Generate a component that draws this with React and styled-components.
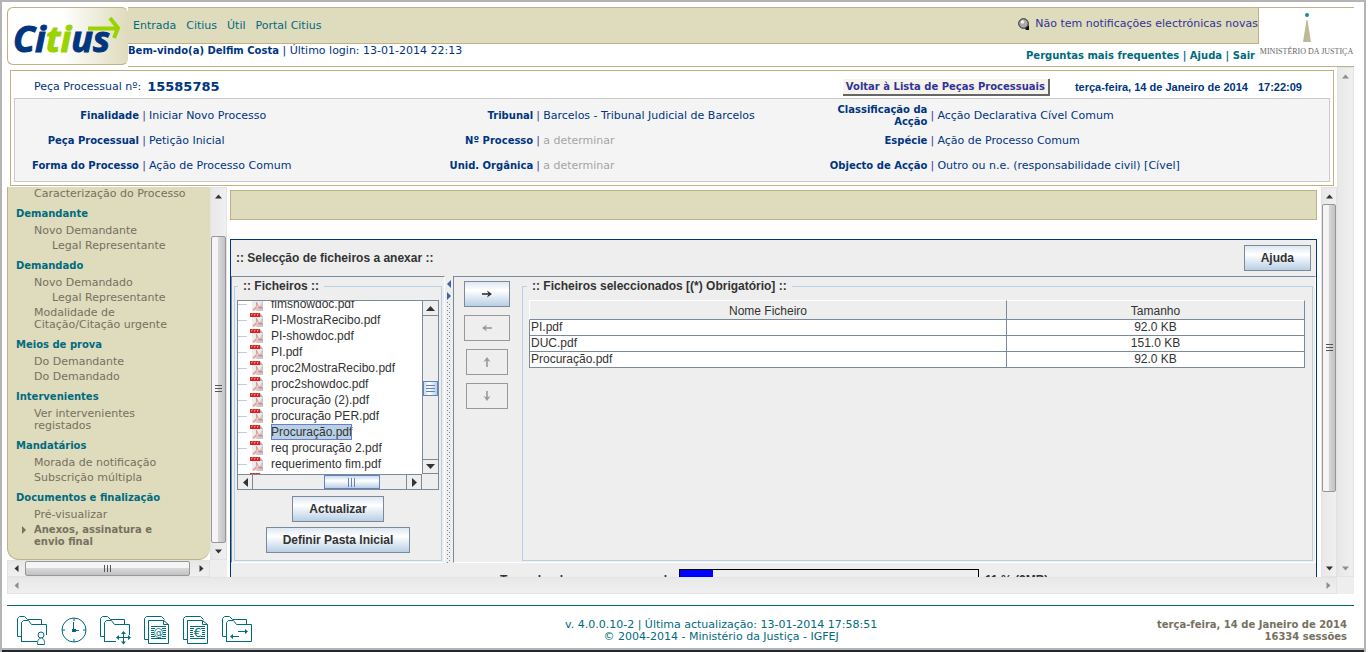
import React, { useState } from "react";
import styled, { createGlobalStyle, css } from "styled-components";

const GlobalStyle = createGlobalStyle`
    * { box-sizing: border-box; }
    body {
        margin: 0;
        background: #fff;
        font-family: "DejaVu Sans", Verdana, sans-serif;
        font-size: 11px;
        line-height: 12px;
        color: #003580;
    }
    a { color: inherit; text-decoration: none; }
    button { font: inherit; cursor: pointer; }
    ul { list-style: none; margin: 0; padding: 0; }
`

const Page = styled.div`
    display: flex;
    flex-direction: column;
    height: 100vh;
    margin-right: 2px;
    padding: 5px 10px 0 5px;
    border: 2px solid #b4b4b4;
    border-bottom: 0;
    overflow: hidden;
`

const Header = styled.header`
    display: flex;
    flex: none;
    height: 60px;
`

const LogoBox = styled.a`
    flex: none;
    width: 121px;
    height: 58px;
    border: 1px solid #bfb186;
    border-right-color: #dfdbbd;
    border-radius: 6px;
    background: linear-gradient(90deg, #fff 45%, #dfdbbd);
    svg { display: block; }
`

const HeaderBody = styled.div`
    display: flex;
    flex: 1;
    border-bottom: 1px solid #bfb186;
`

const HeaderBars = styled.div`
    display: flex;
    flex-direction: column;
    flex: 1;
`

const NavBar = styled.nav`
    display: flex;
    align-items: center;
    gap: 10px;
    height: 37px;
    padding-left: 5px;
    border: 1px solid #bfb186;
    border-left: 0;
    background: #dfdbbd;
    color: #006b7d;
`

const Notice = styled.a`
    display: flex;
    align-items: center;
    gap: 5px;
    margin-left: auto;
    padding-bottom: 3px;
    color: #333399;
`

const WelcomeBar = styled.div`
    display: flex;
    justify-content: space-between;
    padding: 1px 4px 0 0;
    b { font-size: 10px; }
`

const HelpLinks = styled.div`
    padding-top: 5px;
    font-size: 10px;
    font-weight: bold;
    color: #006b7d;
`

const Ministry = styled.div`
    width: 95px;
    border-top: 1px solid #bfb186;
    font-family: "Liberation Serif", serif;
    font-size: 8px;
    text-align: center;
    white-space: nowrap;
    color: #666;
    svg { display: block; margin: 5px auto 4px; }
`

const Frameset = styled.div`
    display: grid;
    grid-template-columns: minmax(0, 1fr) 17px;
    grid-template-rows: minmax(0, 1fr) 17px;
    flex: 1;
    min-height: 0;
`

const FrameContent = styled.div`
    display: flex;
    flex-direction: column;
    min-height: 0;
`

const ProcessPanel = styled.section`
    flex: none;
    margin: 3px 3px 1px;
    padding: 0 3px 3px;
    border: 1px solid #bfb186;
`

const ProcessTitle = styled.div`
    display: flex;
    align-items: center;
    height: 27px;
    padding: 5px 28px 0 20px;
    strong { margin-left: 6px; font-size: 13px; }
    button { margin-left: auto; }
`

const BackButton = styled.button`
    height: 17px;
    padding: 0 3px;
    border: 0 solid #666;
    border-width: 0 2px 2px 0;
    background: #f5f3ec;
    font-size: 10px;
    font-weight: bold;
    line-height: 15px;
    color: #333399;
`

const Clock = styled.span`
    display: flex;
    gap: 10px;
    margin-left: 25px;
    font-family: "Liberation Sans", Arial, sans-serif;
    font-weight: bold;
`

const ProcessData = styled.div`
    display: grid;
    grid-template-columns: 30% 30% 40%;
    padding: 4px 0 3px;
    border: 1px solid #ccc;
    background: #f4f4f4;
`

const DataItem = styled.div`
    display: flex;
    align-items: center;
    height: 25px;
    color: ${props => props.$pending ? "#a5a5a5" : "#003580"};
`

const DataLabel = styled.b`
    width: 124px;
    padding-left: 8px;
    font-size: 10px;
    text-align: right;
    color: #003580;
`

const DataBar = styled.span`
    width: 10px;
    text-align: center;
    color: #4a3f96;
`

const Workspace = styled.div`
    display: flex;
    flex: 1;
    gap: 3px;
    min-height: 0;
`

const Sidebar = styled.aside`
    display: grid;
    grid-template-columns: 203px 17px;
    grid-template-rows: minmax(0, 1fr) 17px;
    flex: none;
`

const Menu = styled.nav`
    overflow: hidden;
    border: 1px solid #bfb186;
    border-width: 0 0 1px 1px;
    border-radius: 0 0 12px 12px;
    background: #dfdbbd;
    color: #76705f;
`

const MenuHeading = styled.h3`
    margin: 0;
    padding: 6px 0 4px 8px;
    font-size: 10px;
    line-height: 12px;
    color: #006b7d;
`

const MenuItem = styled.li`
    display: flex;
    padding: 1px 8px 2px ${props => props.$nested ? 44 : 26}px;
    white-space: pre-line;
    ${props => props.$active && css`
        font-size: 10px;
        font-weight: bold;
        &::before {
            content: "";
            width: 4px;
            height: 8px;
            margin: 2px 8px 0 -12px;
            background: #76705f;
            clip-path: polygon(0 0, 100% 50%, 0 100%);
        }
    `}
`

const MainFrame = styled.main`
    display: flex;
    flex: 1;
    gap: 4px;
    min-width: 0;
`

const MainContent = styled.div`
    display: flex;
    flex-direction: column;
    flex: 1;
    min-width: 0;
    padding-top: 3px;
    overflow: hidden;
`

const EmptyBar = styled.div`
    flex: none;
    height: 30px;
    margin-bottom: 19px;
    border: 1px solid #bfb186;
    background: #dfdbbd;
`

const Applet = styled.div`
    flex: 1;
    min-height: 0;
    overflow: hidden;
    border: 1px solid #003580;
    border-bottom: 0;
    background: #eee;
    font-family: "Liberation Sans", Arial, sans-serif;
    font-size: 12px;
    line-height: 16px;
    color: #333;
`

const AppletTitle = styled.div`
    display: flex;
    align-items: center;
    justify-content: space-between;
    height: 36px;
    padding: 0 5px;
    font-weight: bold;
`

const JavaButton = styled.button`
    height: 26px;
    padding: 0 16px;
    border: 1px solid #7a8a99;
    background: linear-gradient(#dde8f3, #fff 35%, #b8cfe5);
    font-weight: bold;
    color: #333;
    svg { display: block; margin: 0 auto; }
    &:disabled {
        border-color: #999;
        background: #eee;
        color: #999;
    }
`

const SplitPane = styled.div`
    display: grid;
    grid-template-columns: 214px 8px minmax(0, 1fr);
    height: 287px;
`

const Pane = styled.div`
    display: flex;
    padding: 1px 2px;
    border: 1px solid #7a8a99;
    border-right-color: #fff;
    border-bottom-color: #fff;
`

const Divider = styled.div`
    padding: 4px 2px 0;
    background:
        radial-gradient(circle at 0 0, #7a8a99 1px, transparent 1px) 0 0 / 4px 4px,
        radial-gradient(circle at 0 0, #7a8a99 1px, transparent 1px) 2px 2px / 4px 4px;
    background-clip: content-box;
    svg { display: block; background: #eee; }
`

const Group = styled.fieldset`
    flex: 1;
    min-width: 0;
    margin: 0;
    padding: 6px 2px 0 2px;
    border: 1px solid #b8cfe5;
    legend {
        margin-left: ${props => props.$wide ? 2 : 1}px;
        padding: 0 5px;
        font-weight: bold;
        line-height: 16px;
    }
`

const FileBox = styled.div`
    display: grid;
    grid-template-columns: minmax(0, 1fr) 16px;
    grid-template-rows: 173px 15px;
    border: 1px solid #7a8a99;
`

const FileList = styled.div`
    overflow: hidden;
    background: #fff;
    ul { margin-top: -5px; }
`

const FileItem = styled.li`
    display: flex;
    align-items: center;
    height: 16px;
    white-space: nowrap;
    &::before {
        content: "";
        width: 9px;
        margin-right: 3px;
        border-top: 1px solid #b8cfe5;
    }
    svg { margin-right: 7px; }
    span {
        outline: ${props => props.$selected ? "1px solid #6382bf" : "none"};
        outline-offset: -1px;
        background: ${props => props.$selected ? "#b8cfe5" : "none"};
    }
`

const JavaScroll = styled.div`
    display: flex;
    flex-direction: ${props => props.$horizontal ? "row" : "column"};
    border: 0 solid #7a8a99;
    border-width: ${props => props.$horizontal ? "1px 1px 0 0" : "0 0 0 1px"};
    button {
        display: flex;
        align-items: center;
        justify-content: center;
        flex: 0 0 15px;
        padding: 0;
        border: 0 solid #7a8a99;
        background: #eee;
    }
    button:first-child { border-width: ${props => props.$horizontal ? "0 1px 0 0" : "0 0 1px"}; }
    button:last-child { border-width: ${props => props.$horizontal ? "0 0 0 1px" : "1px 0"}; }
`

const JavaThumb = styled.div`
    display: flex;
    flex-direction: ${props => props.$horizontal ? "row" : "column"};
    align-items: center;
    justify-content: center;
    gap: 2px;
    flex: 0 0 ${props => props.$horizontal ? 56 : 15}px;
    border: 1px solid #6382bf;
    background: linear-gradient(${props => props.$horizontal ? "180deg" : "90deg"}, #c8dbee, #fff 40%, #b8cfe5);
    i {
        width: ${props => props.$horizontal ? 1 : 9}px;
        height: ${props => props.$horizontal ? 9 : 1}px;
        background: #6382bf;
    }
`

const Gap = styled.div`
    flex: ${props => props.$grow} 1 0;
`

const FileActions = styled.div`
    display: flex;
    flex-direction: column;
    align-items: center;
    gap: 5px;
    padding-top: 6px;
`

const MoveButtons = styled.div`
    display: flex;
    flex-direction: column;
    align-items: center;
    gap: 8px;
    width: 46px;
    margin: 3px 12px 0 8px;
    ${JavaButton} { width: 42px; padding: 0; }
    ${JavaButton}:nth-child(-n+2) { width: 46px; }
`

const FileTable = styled.table`
    width: calc(100% - 9px);
    margin-left: 4px;
    border-collapse: separate;
    border-spacing: 0;
    table-layout: fixed;
    line-height: 15px;
    th, td {
        padding: 0;
        border: 0 solid #7a8a99;
        border-width: 0 1px 1px 0;
        text-align: center;
        font-weight: normal;
    }
    th {
        height: 20px;
        padding-top: 2px;
        border-top: 1px solid #fff;
    }
    td { height: 16px; background: #fff; }
    td:first-child {
        padding-left: 1px;
        border-left-width: 1px;
        text-align: left;
    }
    th:first-child { width: 61.6%; border-left: 1px solid #fff; }
`

const UsageRow = styled.div`
    display: flex;
    gap: 6px;
    padding: 6px 0 0 269px;
    font-weight: bold;
    span { padding-top: 3px; white-space: nowrap; }
    span:first-child { width: 173px; }
`

const UsageBar = styled.div`
    width: 300px;
    height: 24px;
    border: 1px solid #000;
    div { height: 100%; background: #0000ff; }
`

const ScrollTrack = styled.div`
    display: flex;
    flex-direction: ${props => props.$horizontal ? "row" : "column"};
    flex: none;
    ${props => props.$horizontal ? "height" : "width"}: ${props => props.$slim ? 16 : 17}px;
    border: 1px solid #e3e3e3;
    background: linear-gradient(${props => props.$horizontal ? "180deg" : "90deg"}, #e8e8e8, #f0f0f0);
    button {
        display: flex;
        align-items: center;
        justify-content: center;
        flex: 0 0 16px;
        padding: 0;
        border: 0;
        background: none;
        opacity: ${props => props.$disabled ? 0.5 : 1};
    }
`

const ScrollThumb = styled.div`
    display: flex;
    flex-direction: ${props => props.$horizontal ? "row" : "column"};
    align-items: center;
    justify-content: center;
    gap: 1px;
    flex: ${props => props.$size} 1 0;
    border: 1px solid #979797;
    border-radius: 2px;
    background: linear-gradient(${props => props.$horizontal ? "180deg" : "90deg"}, #f5f5f5 45%, #d8d8da 50%, #c2c2c6);
    i {
        width: ${props => props.$horizontal ? 2 : 7}px;
        height: ${props => props.$horizontal ? 7 : 2}px;
        border: solid #555;
        border-width: ${props => props.$horizontal ? "0 0 0 1px" : "1px 0 0"};
    }
`

const Corner = styled.div`
    background: #eee;
`

const Footer = styled.footer`
    display: grid;
    grid-template-columns: 7fr auto 6fr;
    flex: none;
    height: 43px;
    margin-top: 11px;
    padding: 10px 7px 0 10px;
    border-top: 1px solid #00697a;
    text-align: center;
    color: #006b7d;
`

const Shortcuts = styled.div`
    display: flex;
    gap: 13px;
    height: 29px;
    svg { display: block; }
`

const FooterText = styled.div`
    padding-top: 3px;
`

const Session = styled.div`
    padding-top: 3px;
    font-size: 10px;
    font-weight: bold;
    text-align: right;
    color: #76705f;
`

const BottomStrip = styled.div`
    flex: none;
    height: 4px;
    margin: 0 -12px 0 -7px;
    border-top: 2px solid #b4b4b4;
    background: #22282e;
`

const menu = [
    { items: [{ text: "Caracterização do Processo" }] },
    { title: "Demandante", items: [{ text: "Novo Demandante" }, { text: "Legal Representante", nested: true }] },
    { title: "Demandado", items: [
        { text: "Novo Demandado" },
        { text: "Legal Representante", nested: true },
        { text: "Modalidade de\nCitação/Citação urgente" }
    ] },
    { title: "Meios de prova", items: [{ text: "Do Demandante" }, { text: "Do Demandado" }] },
    { title: "Intervenientes", items: [{ text: "Ver intervenientes\nregistados" }] },
    { title: "Mandatários", items: [{ text: "Morada de notificação" }, { text: "Subscrição múltipla" }] },
    { title: "Documentos e finalização", items: [
        { text: "Pré-visualizar" },
        { text: "Anexos, assinatura e\nenvio final", active: true }
    ] }
]

const processData = [
    ["Finalidade", "Iniciar Novo Processo"],
    ["Tribunal", "Barcelos - Tribunal Judicial de Barcelos"],
    ["Classificação da Acção", "Acção Declarativa Cível Comum"],
    ["Peça Processual", "Petição Inicial"],
    ["Nº Processo", "a determinar"],
    ["Espécie", "Ação de Processo Comum"],
    ["Forma do Processo", "Ação de Processo Comum"],
    ["Unid. Orgânica", "a determinar"],
    ["Objecto de Acção", "Outro ou n.e. (responsabilidade civil) [Cível]"]
]

const files = [
    "fimshowdoc.pdf", "PI-MostraRecibo.pdf", "PI-showdoc.pdf", "PI.pdf",
    "proc2MostraRecibo.pdf", "proc2showdoc.pdf", "procuração (2).pdf",
    "procuração PER.pdf", "Procuração.pdf", "req procuração 2.pdf",
    "requerimento fim.pdf", "requerimento.pdf"
]

const attached = [
    { name: "PI.pdf", size: "92.0 KB" },
    { name: "DUC.pdf", size: "151.0 KB" },
    { name: "Procuração.pdf", size: "92.0 KB" }
]

const rotations = { up: 0, right: 90, down: 180, left: 270 }

const Triangle = ({ dir, big }) => (
    <svg width="9" height="9" viewBox="0 0 9 9">
        <path d={big ? "M0 7L4.5 2L9 7Z" : "M1 6.5L4.5 2.5L8 6.5Z"} fill="#333" transform={`rotate(${rotations[dir]} 4.5 4.5)`} />
    </svg>
)

const Arrow = ({ dir }) => (
    <svg width="12" height="12" viewBox="0 0 12 12">
        <g transform={`rotate(${rotations[dir]} 6 6)`}>
            <path d="M6 11V3" stroke="currentColor" strokeWidth="1.6" />
            <path d="M2.500 6L6 1L9.500 6L6 4.500Z" fill="currentColor" />
        </g>
    </svg>
)

const ScrollBar = ({ horizontal, slim, disabled, before = 0, size, after = 0 }) => (
    <ScrollTrack $horizontal={horizontal} $slim={slim} $disabled={disabled}>
        <button type="button" aria-label={horizontal ? "Esquerda" : "Cima"} disabled={disabled}>
            <Triangle dir={horizontal ? "left" : "up"} />
        </button>
        <Gap $grow={before} />
        {size && <ScrollThumb $horizontal={horizontal} $size={size}><i /><i /><i /></ScrollThumb>}
        <Gap $grow={after} />
        <button type="button" aria-label={horizontal ? "Direita" : "Baixo"} disabled={disabled}>
            <Triangle dir={horizontal ? "right" : "down"} />
        </button>
    </ScrollTrack>
)

const AppletScroll = ({ horizontal, before, after }) => (
    <JavaScroll $horizontal={horizontal}>
        <button type="button" aria-label={horizontal ? "Esquerda" : "Cima"}>
            <Triangle big dir={horizontal ? "left" : "up"} />
        </button>
        <Gap $grow={before} />
        <JavaThumb $horizontal={horizontal}><i /><i /><i /></JavaThumb>
        <Gap $grow={after} />
        <button type="button" aria-label={horizontal ? "Direita" : "Baixo"}>
            <Triangle big dir={horizontal ? "right" : "down"} />
        </button>
    </JavaScroll>
)

const CitiusLogo = () => (
    <svg width="119" height="56" viewBox="0 0 119 56">
        <text x="5" y="44" fontFamily="Open Sans" fontSize="36" fontWeight="700" fontStyle="italic" fill="#003580" stroke="#003580">
            Ci<tspan fill="#9bd300" stroke="#9bd300">ti</tspan>us
        </text>
        <path d="M80 20.500H110" stroke="#9bd300" strokeWidth="4" fill="none" />
        <path d="M102 10L110 20L106 30" stroke="#9bd300" strokeWidth="4" fill="none" />
    </svg>
)

const PdfIcon = () => (
    <svg width="14" height="14" viewBox="0 0 14 14">
        <path d="M2 1H10L13 4V14H2Z" fill="#eceaea" />
        <path d="M13 3V14H6L10 9Z" fill="#c9c7c7" />
        <path d="M10 0V4H13Z" fill="#aaa" />
        <rect width="10" height="4" fill="#d81e1e" />
        <path d="M1.500 2.500V1H3M4.500 3V1H6M7.500 3V1H9" stroke="#f6a5a5" strokeWidth=".7" fill="none" />
        <path d="M3 13C6 11 7.500 8 6.500 5.500C7.500 9 9.500 11 12.500 11C9 10 6 11 3 13Z" stroke="#dd7070" strokeWidth=".8" fill="none" />
    </svg>
)

const Folder = () => (
    <>
        <path d="M4 20.500H.5V2.500L2.500 .5H7.500L10.500 3.500H24.500V8" />
        <path d="M4.500 25.500V6.500L6.500 4.500H11.500L14.500 8.500H29.500V19" />
    </>
)

const Sheets = () => (
    <>
        <path d="M4 23.500H.5V2.500L2.500 .5H17.500L20.500 3.500" />
        <path d="M4.500 4.500H19.500L24.500 8.500V27.500H4.500ZM19.500 4.500V8.500H24.500" />
        <path d="M7 10.500H22M7 12.500H11M18 12.500H22M7 14.500H10M19 14.500H22M7 16.500H10M19 16.500H22M7 18.500H10M19 18.500H22M7 20.500H11M18 20.500H22M7 22.500H22" />
    </>
)

const FooterIcon = ({ width = 31, children }) => (
    <svg width={width} height="29" viewBox={`0 0 ${width} 29`} fill="none" stroke="#006b7d">{children}</svg>
)

const App = () => {
    const [selected, setSelected] = useState("Procuração.pdf");
    return (
        <Page>
            <GlobalStyle />
            <Header>
                <LogoBox href="#" aria-label="Citius"><CitiusLogo /></LogoBox>
                <HeaderBody>
                    <HeaderBars>
                        <NavBar>
                            <a href="#">Entrada</a>
                            <a href="#">Citius</a>
                            <a href="#">Útil</a>
                            <a href="#">Portal Citius</a>
                            <Notice href="#">
                                <svg width="12" height="12" viewBox="0 0 12 12">
                                    <path d="M7 10L11 7V12H8Z" fill="#111" />
                                    <circle cx="5.500" cy="5.500" r="4.800" fill="#aaa" stroke="#222" />
                                    <circle cx="4.500" cy="4" r="1.800" fill="#eee" />
                                </svg>
                                Não tem notificações electrónicas novas
                            </Notice>
                        </NavBar>
                        <WelcomeBar>
                            <span><b>Bem-vindo(a) Delfim Costa</b> | Último login: 13-01-2014 22:13</span>
                            <HelpLinks>
                                <a href="#">Perguntas mais frequentes</a> | <a href="#">Ajuda</a> | <a href="#">Sair</a>
                            </HelpLinks>
                        </WelcomeBar>
                    </HeaderBars>
                    <Ministry>
                        <svg width="8" height="29" viewBox="0 0 8 29">
                            <circle cx="4" cy="2" r="2" fill="#1a8a9e" />
                            <path d="M3.500 7H4.500L8 29H0Z" fill="#c0b998" />
                        </svg>
                        MINISTÉRIO DA JUSTIÇA
                    </Ministry>
                </HeaderBody>
            </Header>
            <Frameset>
                <FrameContent>
                    <ProcessPanel>
                        <ProcessTitle>
                            Peça Processual nº: <strong>15585785</strong>
                            <BackButton type="button">Voltar à Lista de Peças Processuais</BackButton>
                            <Clock><span>terça-feira, 14 de Janeiro de 2014</span><span>17:22:09</span></Clock>
                        </ProcessTitle>
                        <ProcessData>
                            {processData.map(([label, value]) => (
                                <DataItem key={label} $pending={value === "a determinar"}>
                                    <DataLabel>{label}</DataLabel>
                                    <DataBar>|</DataBar>
                                    {value}
                                </DataItem>
                            ))}
                        </ProcessData>
                    </ProcessPanel>
                    <Workspace>
                        <Sidebar>
                            <Menu>
                                {menu.map((section, i) => (
                                    <React.Fragment key={i}>
                                        {section.title && <MenuHeading>{section.title}</MenuHeading>}
                                        <ul>
                                            {section.items.map(item => (
                                                <MenuItem key={item.text} $nested={item.nested} $active={item.active}>
                                                    <a href="#">{item.text}</a>
                                                </MenuItem>
                                            ))}
                                        </ul>
                                    </React.Fragment>
                                ))}
                            </Menu>
                            <ScrollBar before={32} size={307} />
                            <ScrollBar horizontal before={1} size={165} after={3} />
                            <Corner />
                        </Sidebar>
                        <MainFrame>
                            <MainContent>
                                <EmptyBar />
                                <Applet>
                                    <AppletTitle>
                                        :: Selecção de ficheiros a anexar ::
                                        <JavaButton type="button">Ajuda</JavaButton>
                                    </AppletTitle>
                                    <SplitPane>
                                        <Pane>
                                            <Group>
                                                <legend>:: Ficheiros ::</legend>
                                                <FileBox>
                                                    <FileList>
                                                        <ul>
                                                            {files.map(file => (
                                                                <FileItem key={file} $selected={file === selected} onClick={() => setSelected(file)}>
                                                                    <PdfIcon />
                                                                    <span>{file}</span>
                                                                </FileItem>
                                                            ))}
                                                        </ul>
                                                    </FileList>
                                                    <AppletScroll before={64} after={63} />
                                                    <AppletScroll horizontal before={70} after={26} />
                                                </FileBox>
                                                <FileActions>
                                                    <JavaButton type="button">Actualizar</JavaButton>
                                                    <JavaButton type="button">Definir Pasta Inicial</JavaButton>
                                                </FileActions>
                                            </Group>
                                        </Pane>
                                        <Divider>
                                            <svg width="4" height="21" viewBox="0 0 4 21">
                                                <path d="M4 0V8L0 4Z" fill="#4060a8" />
                                                <path d="M0 12V20L4 16Z" fill="#4060a8" />
                                            </svg>
                                        </Divider>
                                        <Pane>
                                            <MoveButtons>
                                                <JavaButton type="button" aria-label="Adicionar"><Arrow dir="right" /></JavaButton>
                                                <JavaButton type="button" aria-label="Remover" disabled><Arrow dir="left" /></JavaButton>
                                                <JavaButton type="button" aria-label="Subir" disabled><Arrow dir="up" /></JavaButton>
                                                <JavaButton type="button" aria-label="Descer" disabled><Arrow dir="down" /></JavaButton>
                                            </MoveButtons>
                                            <Group $wide>
                                                <legend>:: Ficheiros seleccionados [(*) Obrigatório] ::</legend>
                                                <FileTable>
                                                    <thead>
                                                        <tr><th>Nome Ficheiro</th><th>Tamanho</th></tr>
                                                    </thead>
                                                    <tbody>
                                                        {attached.map(file => (
                                                            <tr key={file.name}><td>{file.name}</td><td>{file.size}</td></tr>
                                                        ))}
                                                    </tbody>
                                                </FileTable>
                                            </Group>
                                        </Pane>
                                    </SplitPane>
                                    <UsageRow>
                                        <span>Tamanho da peça processual:</span>
                                        <UsageBar><div style={{ width: "11%" }} /></UsageBar>
                                        <span>11 % (2MB)</span>
                                    </UsageRow>
                                </Applet>
                            </MainContent>
                            <ScrollBar slim size={288} after={68} />
                        </MainFrame>
                    </Workspace>
                </FrameContent>
                <ScrollBar disabled after={1} />
                <ScrollBar horizontal disabled after={1} />
                <Corner />
            </Frameset>
            <Footer>
                <Shortcuts>
                    <FooterIcon>
                        <Folder />
                        <path d="M4 25.500H20M23.500 22.500C20 22.500 20.500 28.500 20.500 28.500H27.500C27.500 28.500 28 22.500 25 22.500" />
                        <circle cx="24" cy="19" r="3" fill="#fff" />
                    </FooterIcon>
                    <FooterIcon width={26}>
                        <circle cx="13" cy="14" r="12" />
                        <path d="M13 2V5M13 23V26M1 14H4M22 14H25M12.500 6V14.500H18" />
                        <path d="M11 13H15V16H11Z" fill="#006b7d" stroke="none" />
                    </FooterIcon>
                    <FooterIcon>
                        <Folder />
                        <path d="M4 25.500H16M23.500 16V27M18 21.500H29" />
                        <path d="M21 18H26L23.500 15ZM21 25.500H26L23.500 28.500ZM19 19V24L16 21.500ZM28 19V24L31 21.500Z" fill="#006b7d" stroke="none" />
                    </FooterIcon>
                    <FooterIcon width={26}>
                        <Sheets />
                        <text x="14.500" y="20" textAnchor="middle" fontSize="10" fill="#006b7d" stroke="none">@</text>
                    </FooterIcon>
                    <FooterIcon width={26}>
                        <Sheets />
                        <text x="14.500" y="21" textAnchor="middle" fontSize="12" fill="#006b7d" stroke="none">€</text>
                    </FooterIcon>
                    <FooterIcon>
                        <Folder />
                        <path d="M4 25.500H29.500V19M16 15.500H24M10 20.500H17" />
                        <path d="M23 13V18L26 15.500ZM11 18V23L8 20.500Z" fill="#006b7d" stroke="none" />
                    </FooterIcon>
                </Shortcuts>
                <FooterText>
                    v. 4.0.0.10-2 | Última actualização: 13-01-2014 17:58:51<br />
                    © 2004-2014 - Ministério da Justiça - IGFEJ
                </FooterText>
                <Session>terça-feira, 14 de Janeiro de 2014<br />16334 sessões</Session>
            </Footer>
            <BottomStrip />
        </Page>
    );
};

export default App;
